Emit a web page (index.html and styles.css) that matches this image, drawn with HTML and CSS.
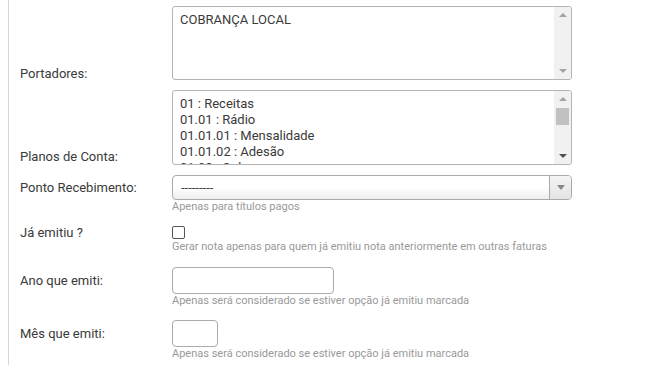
FILE: index.html
```html
<!DOCTYPE html>
<html lang="pt-BR">
<head>
<meta charset="utf-8">
<title>Form</title>
<link rel="stylesheet" href="styles.css">
</head>
<body>
<div class="page">
  <div class="form">
    <div class="row list-row">
      <label class="lbl">Portadores:</label>
      <div class="listbox h74">
        <div class="options">
          <div class="opt">COBRANÇA LOCAL</div>
        </div>
        <div class="sbar">
          <span class="arr up dim"></span>
          <span class="track"></span>
          <span class="arr down dim"></span>
        </div>
      </div>
    </div>

    <div class="row list-row">
      <label class="lbl">Planos de Conta:</label>
      <div class="listbox h75">
        <div class="options">
          <div class="opt">01 : Receitas</div>
          <div class="opt">01.01 : Rádio</div>
          <div class="opt">01.01.01 : Mensalidade</div>
          <div class="opt">01.01.02 : Adesão</div>
          <div class="opt">01.02 : Cobrança</div>
        </div>
        <div class="sbar">
          <span class="arr up dim"></span>
          <span class="track"><span class="thumb"></span></span>
          <span class="arr down"></span>
        </div>
      </div>
    </div>

    <div class="row">
      <label class="lbl">Ponto Recebimento:</label>
      <div class="select">
        <span class="sel-text">---------</span>
        <span class="sel-btn"><span class="caret"></span></span>
      </div>
      <div class="help">Apenas para títulos pagos</div>
    </div>

    <div class="row">
      <label class="lbl">Já emitiu ?</label>
      <div class="check-wrap"><input type="checkbox" class="check"></div>
      <div class="help">Gerar nota apenas para quem já emitiu nota anteriormente em outras faturas</div>
    </div>

    <div class="row">
      <label class="lbl">Ano que emiti:</label>
      <div><input type="text" class="input ano"></div>
      <div class="help">Apenas será considerado se estiver opção já emitiu marcada</div>
    </div>

    <div class="row">
      <label class="lbl">Mês que emiti:</label>
      <div><input type="text" class="input mes"></div>
      <div class="help">Apenas será considerado se estiver opção já emitiu marcada</div>
    </div>
  </div>
</div>
</body>
</html>
```

FILE: styles.css
```css
* { box-sizing: border-box; }
html, body { margin: 0; padding: 0; background: #fff; }
body {
  font-family: Roboto, "Liberation Sans", Arial, sans-serif;
  font-size: 13px;
  color: #3a3a3a;
  width: 650px;
  height: 365px;
  overflow: hidden;
}
.page {
  margin-left: 8px;
  border-left: 1px solid #d6d6d6;
  height: 365px;
  padding-left: 11px;
  padding-top: 6px;
}
.form { display: flex; flex-direction: column; }
.row {
  display: grid;
  grid-template-columns: 152px 400px;
  margin-bottom: 10px;
}
.row:nth-child(3) { margin-bottom: 12px; }
.row:nth-child(4) { margin-bottom: 13px; }
.row:nth-child(5) { margin-bottom: 12px; }
.lbl {
  grid-column: 1;
  grid-row: 1;
  align-self: center;
  line-height: 14px;
}
.list-row .lbl { align-self: end; line-height: 12px; }
.row:nth-child(2) .lbl { margin-bottom: 2px; }
.help {
  grid-column: 2;
  grid-row: 2;
  font-size: 11px;
  line-height: 14px;
  color: #999;
  white-space: nowrap;
}

/* multi-select list boxes */
.listbox {
  grid-column: 2;
  display: flex;
  border: 1px solid #b4b4b4;
  border-radius: 3px;
  overflow: hidden;
  background: #fff;
}
.h74 { height: 74px; }
.h75 { height: 75px; }
.options {
  flex: 1;
  padding: 5px 7px 0;
  line-height: 16px;
  overflow: hidden;
  color: #3a3a3a;
}
.opt { white-space: nowrap; }
.sbar {
  width: 17px;
  background: #f1f1f1;
  display: flex;
  flex-direction: column;
  align-items: center;
}
.arr {
  width: 0;
  height: 0;
  border-left: 4px solid transparent;
  border-right: 4px solid transparent;
  margin: 6px 0;
}
.arr.up { border-bottom: 4px solid #505050; }
.arr.down { border-top: 4px solid #505050; }
.arr.up.dim { border-bottom-color: #a3a3a3; }
.arr.down.dim { border-top-color: #a3a3a3; }
.track { flex: 1; width: 100%; display: flex; justify-content: center; }
.thumb {
  width: 13px;
  height: 17px;
  margin-top: 1px;
  background: #c1c1c1;
}

/* single select */
.select {
  grid-column: 2;
  height: 25px;
  border: 1px solid #aaa;
  border-radius: 4px;
  background: linear-gradient(#ffffff 50%, #eeeeee 100%);
  display: flex;
  align-items: center;
  overflow: hidden;
}
.sel-text {
  flex: 1;
  padding-left: 8px;
  font-size: 13px;
  color: #444;
}
.sel-btn {
  width: 22px;
  height: 100%;
  border-left: 1px solid #aaa;
  background: linear-gradient(#f4f4f4, #e4e4e4);
  display: flex;
  align-items: center;
  justify-content: center;
}
.caret {
  width: 0;
  height: 0;
  border-left: 4px solid transparent;
  border-right: 4px solid transparent;
  border-top: 5px solid #888;
}

/* checkbox */
.check-wrap { grid-column: 2; height: 13px; }
.check {
  appearance: none;
  -webkit-appearance: none;
  display: block;
  margin: 0;
  width: 13px;
  height: 13px;
  border: 1px solid #555;
  border-radius: 2px;
  background: #fff;
}

/* text inputs */
.input {
  display: block;
  margin: 0;
  height: 27px;
  border: 1px solid #aaa;
  border-radius: 4px;
  background: #fff;
  padding: 0 6px;
  font: inherit;
}
.ano { width: 162px; }
.mes { width: 46px; }
```
